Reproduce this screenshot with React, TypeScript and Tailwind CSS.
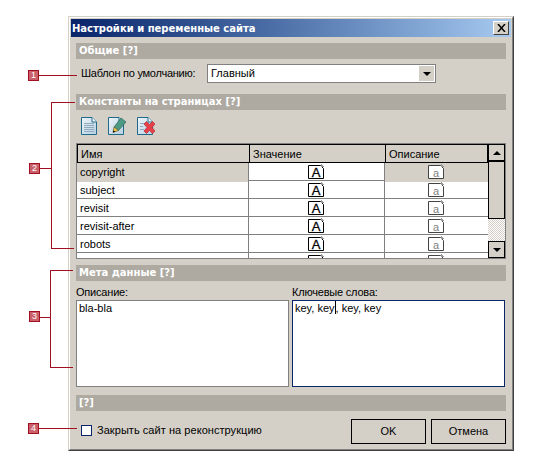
const rows = ["copyright", "subject", "revisit", "revisit-after", "robots"];

function SectionBar({ title }: { title: string }) {
  return (
    <div className="flex h-4 items-center bg-[#aeaaa2] pl-[3px] font-['DejaVu_Sans'] text-[10px] leading-4 font-bold text-white">
      {title}
    </div>
  );
}

function CellIcon({ letter, muted }: { letter: string; muted?: boolean }) {
  const stroke = muted ? "#444444" : "#000000";
  return (
    <svg width="17" height="15" viewBox="0 0 17 15" className="block">
      <path d="M0.5 1.5H12.5L15.5 4.5V14.5H0.5Z" fill="#fff" stroke={stroke} />
      <path d="M13 0H14V1H15V2H16V3H13Z" fill="#9a9a9a" />
      {letter && (
        <text
          x="8"
          y="12.5"
          textAnchor="middle"
          fontFamily="'Liberation Sans', sans-serif"
          fontSize={muted ? 11 : 13}
          fontWeight={400}
          stroke={muted ? "none" : "#000"}
          strokeWidth={muted ? 0 : 0.3}
          fill={muted ? "#808080" : "#000"}
        >
          {letter}
        </text>
      )}
    </svg>
  );
}

function DocBase({ id }: { id: string }) {
  return (
    <>
      <defs>
        <linearGradient id={id} x1="0" y1="0" x2="1" y2="1">
          <stop offset="0" stopColor="#eef4f9" />
          <stop offset="1" stopColor="#b4cfe2" />
        </linearGradient>
      </defs>
      <path d="M0.5 0.5H11L15.5 5V17.5H0.5Z" fill={`url(#${id})`} stroke="#1e6a88" strokeWidth="1" />
      <path d="M11 0.5V5H15.5" fill="#f5f8fb" stroke="#1e6a88" strokeWidth="1" />
    </>
  );
}

function NewIcon() {
  return (
    <svg width="16" height="18" viewBox="0 0 16 18" className="block">
      <DocBase id="doc-new" />
      <path d="M3 6.5H13M3 8.5H13M3 10.5H13M3 12.5H13M3 14.5H13" stroke="#8fa9bd" strokeWidth="1" />
    </svg>
  );
}

function EditIcon() {
  return (
    <svg width="18" height="18" viewBox="0 0 18 18" className="block">
      <DocBase id="doc-edit" />
      <path d="M13 1L18 5L10.5 13.5L6 10Z" fill="#4d9a84" stroke="#2a6a5a" strokeWidth="0.7" />
      <path d="M6 10L10.5 13.5L5 15.5Z" fill="#f0c848" stroke="#5a5a30" strokeWidth="0.7" />
      <path d="M5 13.5L5 15.5L7.5 14.6Z" fill="#111" />
    </svg>
  );
}

function DeleteIcon() {
  return (
    <svg width="18" height="18" viewBox="0 0 18 18" className="block">
      <DocBase id="doc-delete" />
      <path d="M3 6.5H8M3 9.5H6M3 12.5H7" stroke="#8fa9bd" strokeWidth="1" />
      <path
        d="M7 7L9.5 4.5L12.5 7.5L15.5 4.5L18 7L15 10.5L18 14L15.5 16.5L12.5 13.5L9.5 16.5L7 14L10 10.5Z"
        fill="#e8404a"
        stroke="#b02a32"
        strokeWidth="0.7"
      />
    </svg>
  );
}

function ScrollButton({ up }: { up?: boolean }) {
  return (
    <div className="flex h-[17px] items-center justify-center border border-black bg-[#d4d0c8]">
      <div
        className={
          up
            ? "h-0 w-0 border-x-[4px] border-b-[4px] border-x-transparent border-b-black"
            : "h-0 w-0 border-x-[4px] border-t-[4px] border-x-transparent border-t-black"
        }
      />
    </div>
  );
}

function Callout({ n, className }: { n: number; className: string }) {
  return (
    <div
      className={`absolute flex h-[11px] w-[11px] items-center justify-center border border-[#a01020] bg-[#c9606a] font-['Liberation_Sans'] text-[9px] leading-none text-white ${className}`}
    >
      {n}
    </div>
  );
}

function Line({ className }: { className: string }) {
  return <div className={`absolute bg-[#a01020] ${className}`} />;
}

export default function App() {
  return (
    <div className="relative h-[471px] w-[539px] bg-white pt-4 pl-[68px] font-['Liberation_Sans',sans-serif] text-[11px] text-black">
      <div className="h-[435px] w-[446px] border border-t-[#d4d0c8] border-r-[#404040] border-b-[#404040] border-l-[#d4d0c8]">
        <div className="h-full border border-t-white border-r-[#808080] border-b-[#808080] border-l-white bg-[#d4d0c8] p-px">
          <div className="relative flex h-[18px] items-center bg-gradient-to-r from-[#0a246a] to-[#a6caf0] pl-px font-['DejaVu_Sans'] text-[10px] font-bold text-white">
            Настройки и переменные сайта
            <div className="absolute top-0.5 right-0.5 flex h-[14px] w-4 items-center justify-center border border-t-white border-r-[#404040] border-b-[#404040] border-l-white bg-[#d4d0c8]">
              <svg width="9" height="8" viewBox="0 0 9 8">
                <path d="M1 0L8 8M8 0L1 8" stroke="#000" strokeWidth="1.5" />
              </svg>
            </div>
          </div>

          <div className="px-[5px]">
            <div className="mt-1.5">
              <SectionBar title="Общие [?]" />
            </div>

            <div className="mt-[5px] flex h-[19px] items-center pl-[5px]">
              <span className="w-[126px] tracking-[-0.25px]">Шаблон по умолчанию:</span>
              <div className="flex h-[19px] w-[229px] items-center justify-between border border-[#808080] bg-white pr-px pl-[3px]">
                <span>Главный</span>
                <div className="flex h-[15px] w-[15px] items-center justify-center bg-[#d4d0c8]">
                  <div className="h-0 w-0 border-x-[4px] border-t-[4px] border-x-transparent border-t-black" />
                </div>
              </div>
            </div>

            <div className="mt-[11px]">
              <SectionBar title="Константы на страницах [?]" />
            </div>

            <div className="mt-1.5 flex h-[19px] items-center gap-[11px] pl-[5px]">
              <NewIcon />
              <EditIcon />
              <DeleteIcon />
            </div>

            <div className="mt-2 flex h-[116px] overflow-hidden border border-[#808080]">
              <div className="w-[411px] overflow-hidden">
                <div className="grid h-[19px] grid-cols-[171px_136px_104px] border border-black bg-[#d4d0c8] leading-[18px]">
                  <div className="pl-[3px]">Имя</div>
                  <div className="border-l border-black pl-[3px]">Значение</div>
                  <div className="border-l border-black pl-[3px]">Описание</div>
                </div>
                {[...rows, ""].map((name, i) => (
                  <div
                    key={i}
                    className="grid h-[18px] grid-cols-[171px_136px_104px] border-b border-[#808080] bg-white leading-[19px]"
                  >
                    <div className={`pl-[3px] ${i === 0 ? "bg-[#d4d0c8]" : ""}`}>{name}</div>
                    <div className="flex justify-center border-l border-[#808080] pt-px">
                      <CellIcon letter={i < 5 ? "A" : ""} />
                    </div>
                    <div className={`flex justify-center border-l border-[#808080] pt-px ${i === 0 ? "bg-[#d4d0c8]" : ""}`}>
                      <CellIcon letter={i < 5 ? "a" : ""} muted />
                    </div>
                  </div>
                ))}
              </div>
              <div className="flex flex-1 flex-col">
                <ScrollButton up />
                <div className="h-[58px] border border-black bg-[#d4d0c8]" />
                <div className="flex-1 bg-[repeating-conic-gradient(#d4d0c8_0_25%,#ffffff_0_50%)] bg-[length:2px_2px]" />
                <ScrollButton />
              </div>
            </div>

            <div className="mt-1.5">
              <SectionBar title="Мета данные [?]" />
            </div>

            <div className="mt-[3px] grid grid-cols-[213px_213px] gap-x-[3px]">
              <div>
                <div className="h-4 leading-4 tracking-[-0.2px]">Описание:</div>
                <div className="h-[87px] border border-[#808080] bg-white pl-0.5 leading-[15px]">bla-bla</div>
              </div>
              <div>
                <div className="h-4 leading-4 tracking-[-0.2px]">Ключевые слова:</div>
                <div className="h-[87px] border border-[#0a246a] bg-white pl-0.5 leading-[15px]">
                  key, key<span className="inline-block h-[13px] w-px bg-black align-text-bottom" />, key, key
                </div>
              </div>
            </div>

            <div className="mt-2">
              <SectionBar title="[?]" />
            </div>

            <div className="mt-2 flex h-[25px] items-start">
              <div className="mt-[3px] flex items-center gap-[5px] pl-[5px]">
                <div className="h-[11px] w-[11px] border border-[#0a246a] bg-white" />
                <span className="tracking-[0.05px]">Закрыть сайт на реконструкцию</span>
              </div>
              <div className="ml-auto flex gap-[5px]">
                <div className="flex h-[25px] w-[75px] items-center justify-center border border-black">OK</div>
                <div className="flex h-[25px] w-[75px] items-center justify-center border border-black">Отмена</div>
              </div>
            </div>
          </div>
        </div>
      </div>

      {/* annotations drawn over the dialog */}
      <Callout n={1} className="top-[70px] left-[28px]" />
      <Line className="top-[75px] left-[39px] h-px w-[38px]" />

      <Callout n={2} className="top-[163px] left-[29px]" />
      <Line className="top-[168px] left-[40px] h-px w-[11px]" />
      <Line className="top-[102px] left-[51px] h-[147px] w-px" />
      <Line className="top-[102px] left-[51px] h-px w-6" />
      <Line className="top-[248px] left-[51px] h-px w-[23px]" />

      <Callout n={3} className="top-[311px] left-[29px]" />
      <Line className="top-[317px] left-[40px] h-px w-2.5" />
      <Line className="top-[270px] left-[50px] h-[98px] w-px" />
      <Line className="top-[270px] left-[50px] h-px w-[23px]" />
      <Line className="top-[367px] left-[50px] h-px w-[23px]" />

      <Callout n={4} className="top-[423px] left-[28px]" />
      <Line className="top-[428px] left-[39px] h-px w-[38px]" />
    </div>
  );
}
